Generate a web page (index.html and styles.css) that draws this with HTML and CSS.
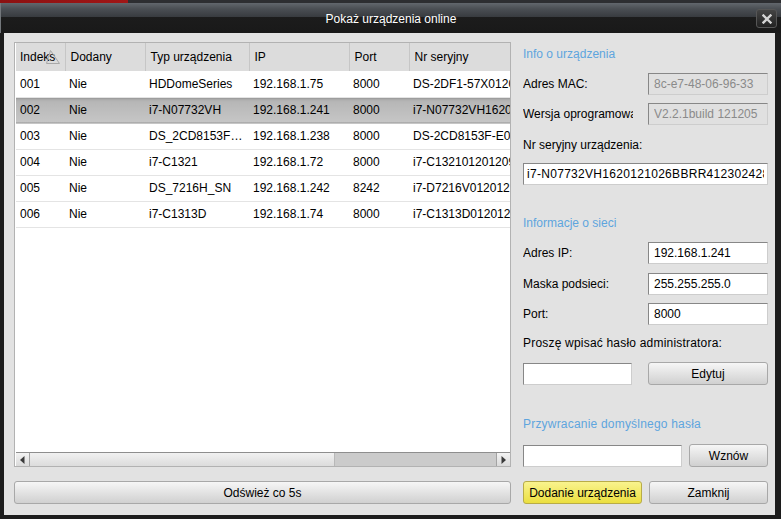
FILE: index.html
```html
<!DOCTYPE html>
<html lang="pl">
<head>
<meta charset="utf-8">
<title>Pokaż urządzenia online</title>
<link rel="stylesheet" href="styles.css">
</head>
<body>
<div class="window">
  <div class="titlebar">
    <span class="title">Pokaż urządzenia online</span>
    <button class="close" aria-label="Zamknij"><svg width="10" height="10" viewBox="0 0 10 10"><path d="M1.5 1.5 L8.5 8.5 M8.5 1.5 L1.5 8.5" stroke="#d4d4d4" stroke-width="2.4" stroke-linecap="square" fill="none"/></svg></button>
  </div>
  <div class="content">
    <div class="left">
      <div class="listbox">
        <div class="tablewrap">
          <table class="devices">
            <colgroup>
              <col class="c-idx"><col class="c-add"><col class="c-type"><col class="c-ip"><col class="c-port"><col class="c-sn">
            </colgroup>
            <thead>
              <tr>
                <th class="sorted">Indeks<svg class="sort" width="14" height="14" viewBox="0 0 14 14"><path d="M4.5 0.5 L0.5 13.5 L13.5 13.5 Z" fill="none" stroke="#a8a8a8" stroke-width="1"/></svg></th>
                <th>Dodany</th>
                <th>Typ urządzenia</th>
                <th>IP</th>
                <th>Port</th>
                <th>Nr seryjny</th>
              </tr>
            </thead>
            <tbody>
              <tr><td>001</td><td>Nie</td><td>HDDomeSeries</td><td>192.168.1.75</td><td>8000</td><td>DS-2DF1-57X0120121012CCWR41230</td></tr>
              <tr class="selected"><td>002</td><td>Nie</td><td>i7-N07732VH</td><td>192.168.1.241</td><td>8000</td><td>i7-N07732VH1620121026BBRR412302428</td></tr>
              <tr><td>003</td><td>Nie</td><td>DS_2CD8153F…</td><td>192.168.1.238</td><td>8000</td><td>DS-2CD8153F-E0120121017CCWR4123</td></tr>
              <tr><td>004</td><td>Nie</td><td>i7-C1321</td><td>192.168.1.72</td><td>8000</td><td>i7-C1321012012091BBRR41230</td></tr>
              <tr><td>005</td><td>Nie</td><td>DS_7216H_SN</td><td>192.168.1.242</td><td>8242</td><td>i7-D7216V0120121012BBRR4123</td></tr>
              <tr><td>006</td><td>Nie</td><td>i7-C1313D</td><td>192.168.1.74</td><td>8000</td><td>i7-C1313D0120121010BBRR4123</td></tr>
            </tbody>
          </table>
        </div>
        <div class="hscroll">
          <span class="arrow"><svg width="5" height="8" viewBox="0 0 5 8"><path d="M4.5 0 L0 4 L4.5 8 Z" fill="#3a3a3a"/></svg></span>
          <span class="thumb"></span>
          <span class="track"></span>
          <span class="arrow arrow-right"><svg width="5" height="8" viewBox="0 0 5 8"><path d="M0.5 0 L5 4 L0.5 8 Z" fill="#3a3a3a"/></svg></span>
        </div>
      </div>
      <button class="btn wide">Odśwież co 5s</button>
    </div>

    <div class="right">
      <div class="section-title first">Info o urządzenia</div>
      <div class="field mt9">
        <span class="flabel">Adres MAC:</span>
        <input class="input disabled" value="8c-e7-48-06-96-33" readonly>
      </div>
      <div class="field mt8">
        <span class="flabel">Wersja oprogramowania:</span>
        <input class="input disabled" value="V2.2.1build 121205" readonly>
      </div>
      <div class="plain-label mt10">Nr seryjny urządzenia:</div>
      <input class="input full serial mt8" value="i7-N07732VH1620121026BBRR412302428" readonly>

      <div class="section-title mt28">Informacje o sieci</div>
      <div class="field mt9">
        <span class="flabel">Adres IP:</span>
        <input class="input" value="192.168.1.241">
      </div>
      <div class="field mt9">
        <span class="flabel">Maska podsieci:</span>
        <input class="input" value="255.255.255.0">
      </div>
      <div class="field mt8">
        <span class="flabel">Port:</span>
        <input class="input" value="8000">
      </div>
      <div class="plain-label wide-text mt8">Proszę wpisać hasło administratora:</div>
      <div class="btnrow mt9">
        <input class="input pwd" type="password" value="">
        <button class="btn w120">Edytuj</button>
      </div>

      <div class="section-title wide-text mt29">Przywracanie domyślnego hasła</div>
      <div class="btnrow mt10">
        <input class="input restore" value="">
        <button class="btn w79">Wznów</button>
      </div>

      <div class="btnrow bottom">
        <button class="btn primary w119">Dodanie urządzenia</button>
        <button class="btn w119">Zamknij</button>
      </div>
    </div>
  </div>
</div>
</body>
</html>
```

FILE: styles.css
```css
* { box-sizing: border-box; }
html, body { margin: 0; padding: 0; }
body {
  width: 781px;
  height: 519px;
  overflow: hidden;
  padding-top: 3px;
  background: linear-gradient(to right, #8c1111 0, #a01616 128px, #2d2e31 128px, #2d2e31 100%);
  font-family: "Liberation Sans", Arial, sans-serif;
  font-size: 12px;
  color: #000;
}
.window {
  height: 516px;
  display: flex;
  flex-direction: column;
}
.titlebar {
  height: 30px;
  flex: none;
  display: grid;
  grid-template-columns: 1fr auto 1fr;
  align-items: center;
  background: linear-gradient(#62676d 0, #4a4e53 6px, #383b3f 14px, #1c1c1c 14px, #191919 100%);
  border-left: 1px solid #73777b;
}
.title {
  grid-column: 2;
  color: #fff;
  font-size: 12px;
  margin-top: 1px;
}
.close {
  grid-column: 3;
  justify-self: end;
  width: 21px;
  height: 19px;
  margin: 1px 4px 0 0;
  padding: 0;
  border: 1px solid #565656;
  border-radius: 3px;
  background: linear-gradient(#444, #222);
  display: flex;
  align-items: center;
  justify-content: center;
}
.content {
  flex: 1;
  display: flex;
  gap: 12px;
  background: #e2e2e2;
  border-left: 4px solid #1c1c1c;
  border-right: 6px solid #1c1c1c;
  border-bottom: 4px solid #1c1c1c;
  padding: 9px 7px 11px 10px;
}
.left {
  width: 497px;
  display: flex;
  flex-direction: column;
}
.listbox {
  flex: 1;
  display: flex;
  flex-direction: column;
  background: #fff;
  border: 1px solid #b2b2b2;
  padding-left: 1px;
  min-height: 0;
}
.tablewrap {
  flex: 1;
  overflow: hidden;
}
.devices {
  border-collapse: collapse;
  table-layout: fixed;
  width: 600px;
}
.c-idx { width: 49px; }
.c-add { width: 80px; }
.c-type { width: 104px; }
.c-ip { width: 100px; }
.c-port { width: 60px; }
.c-sn { width: 207px; }
.devices th {
  height: 28px;
  padding: 0 0 0 4px;
  background: #dcdcdc;
  font-weight: normal;
  text-align: left;
  white-space: nowrap;
  border-right: 1px solid #c6c6c6;
}
.devices th + th { padding-left: 5px; }
.devices th.sorted { position: relative; }
.sort {
  position: absolute;
  left: 30px;
  top: 7px;
}
.devices td {
  height: 26px;
  padding: 0 4px;
  white-space: nowrap;
  overflow: hidden;
  border-bottom: 1px solid #e4e4e4;
}
.devices tr.selected td {
  background: linear-gradient(#8e8e8e 0, #acacac 2px, #b6b6b6 4px, #c6c6c6 100%);
  border-bottom-color: #c6c6c6;
}
.hscroll {
  height: 14px;
  flex: none;
  display: flex;
  border-top: 1px solid #8e8e8e;
  background: #cbcbcb;
}
.arrow {
  width: 14px;
  flex: none;
  display: flex;
  align-items: center;
  justify-content: center;
  background: linear-gradient(#f3f3f3, #dadada);
  border-right: 1px solid #a3a3a3;
}
.arrow-right {
  border-right: none;
  border-left: 1px solid #a3a3a3;
}
.thumb {
  width: 305px;
  flex: none;
  background: linear-gradient(#f1f1f1, #dcdcdc);
  border-right: 1px solid #b8b8b8;
}
.track { flex: 1; }

.btn {
  height: 23px;
  padding: 0;
  border: 1px solid #a8a8a8;
  border-radius: 3px;
  background: linear-gradient(#f6f6f6, #d0d0d0);
  font-family: "Liberation Sans", Arial, sans-serif;
  font-size: 12px;
  color: #000;
  flex: none;
}
.btn.wide {
  margin-top: 14px;
  width: 100%;
}
.btn.primary {
  background: linear-gradient(#f9f38e, #ebdf40);
  border-color: #b8ac48;
}
.w120 { width: 120px; }
.w119 { width: 119px; }
.w79 { width: 79px; }

.right {
  width: 245px;
  display: flex;
  flex-direction: column;
}
.section-title {
  height: 20px;
  line-height: 20px;
  color: #5ea5de;
  white-space: nowrap;
}
.section-title.first { margin-top: 2px; }
.field {
  height: 22px;
  display: flex;
  align-items: center;
  justify-content: space-between;
}
.flabel {
  display: block;
  width: 110px;
  flex: none;
  overflow: hidden;
  white-space: nowrap;
  line-height: 22px;
}
.plain-label {
  height: 20px;
  line-height: 20px;
  white-space: nowrap;
}
.wide-text { letter-spacing: 0.2px; }
.input {
  height: 22px;
  width: 120px;
  flex: none;
  margin: 0;
  padding: 0 5px;
  border: 1px solid;
  border-color: #878787 #cdcdcd #cdcdcd #878787;
  background: #fff;
  font-family: "Liberation Sans", Arial, sans-serif;
  font-size: 12px;
  color: #000;
  outline: none;
}
.input.disabled {
  background: #e0e0e0;
  color: #8a8a8a;
}
.input.full { width: 245px; }
.input.serial {
  padding: 0 3px;
  letter-spacing: 0.3px;
}
.input.pwd { width: 109px; }
.input.restore { width: 159px; }
.btnrow {
  height: 23px;
  display: flex;
  align-items: center;
  justify-content: space-between;
  flex: none;
}
.btnrow.bottom { margin-top: auto; }

.mt8 { margin-top: 8px; }
.mt9 { margin-top: 9px; }
.mt10 { margin-top: 10px; }
.mt28 { margin-top: 28px; }
.mt29 { margin-top: 29px; }
```
